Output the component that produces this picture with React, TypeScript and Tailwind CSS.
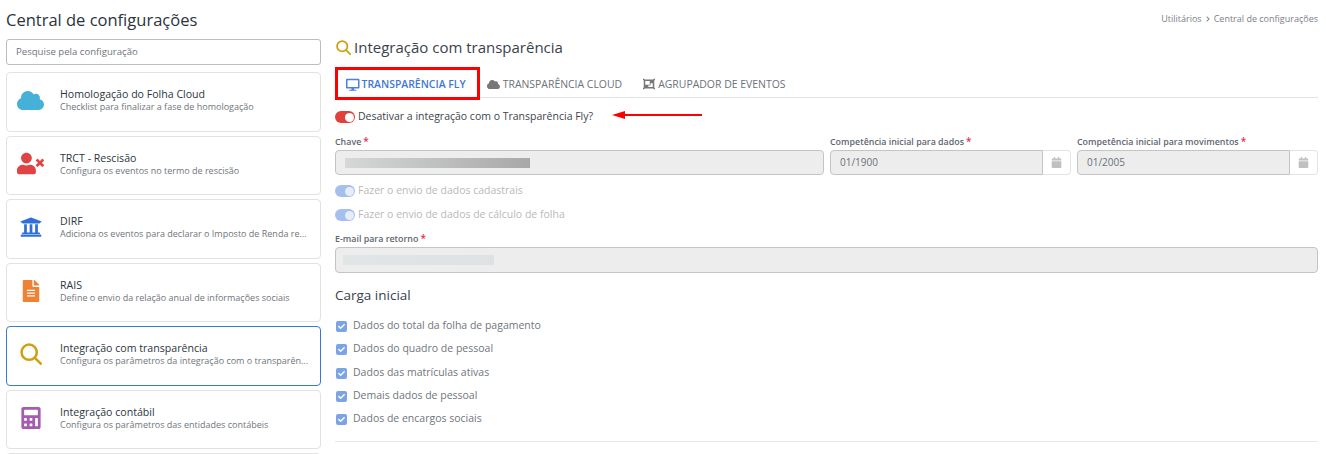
import { FaCloud, FaUserTimes, FaUniversity, FaFileAlt, FaCalculator, FaDesktop, FaObjectGroup, FaCalendar, FaCheck, FaChevronRight } from "react-icons/fa";
import type { ReactNode } from "react";

function SearchRing({ className }: { className: string }) {
  return (
    <svg className={className} viewBox="0 0 24 24" fill="none" stroke="#cf9f14" strokeWidth="2.8" strokeLinecap="round">
      <circle cx="10" cy="10" r="8.3" />
      <path d="M16.2 16.2L22.6 22.6" />
    </svg>
  );
}

const cards: { icon: ReactNode; title: string; sub: string; active?: boolean }[] = [
  { icon: <FaCloud className="text-[#45b0d8] text-[27px]" />, title: "Homologação do Folha Cloud", sub: "Checklist para finalizar a fase de homologação" },
  { icon: <FaUserTimes className="text-[#e04343] text-[27px]" />, title: "TRCT - Rescisão", sub: "Configura os eventos no termo de rescisão" },
  { icon: <FaUniversity className="text-[#2f6fd8] text-[22px]" />, title: "DIRF", sub: "Adiciona os eventos para declarar o Imposto de Renda re..." },
  { icon: <FaFileAlt className="text-[#ee8335] text-[22px]" />, title: "RAIS", sub: "Define o envio da relação anual de informações sociais" },
  { icon: <SearchRing className="w-[22px] h-[22px]" />, title: "Integração com transparência", sub: "Configura os parâmetros da integração com o transparên...", active: true },
  { icon: <FaCalculator className="text-[#a45cb0] text-[22px]" />, title: "Integração contábil", sub: "Configura os parâmetros das entidades contábeis" },
];

function Card({ icon, title, sub, active }: { icon: ReactNode; title: string; sub: string; active?: boolean }) {
  return (
    <div className={`h-[59.5px] shrink-0 rounded border bg-white flex ${active ? "border-[#3a78d8]" : "border-[#e2e2e2]"}`}>
      <div className="w-[53px] shrink-0 flex items-center justify-center pr-[6px] pb-[3px]">{icon}</div>
      <div className="min-w-0 flex-1 pt-[14px] pr-2">
        <div className="text-[10.6px] leading-[14px] text-[#2d3640] truncate">{title}</div>
        <div className="text-[9px] leading-[12px] text-[#70757c] truncate">{sub}</div>
      </div>
    </div>
  );
}

function Req() {
  return <span className="text-[#e0334c] text-[10px] leading-none ml-[2px]">*</span>;
}

function Label({ children }: { children: ReactNode }) {
  return (
    <div className="text-[8.9px] leading-[14px] font-semibold text-[#5f6670] whitespace-nowrap">
      {children}
      <Req />
    </div>
  );
}

function DateField({ label, value }: { label: string; value: string }) {
  return (
    <div className="w-[241px] shrink-0">
      <Label>{label}</Label>
      <div className="mt-[1px] h-[25px] flex">
        <div className="flex-1 border border-[#c4c4c4] rounded-l bg-[#ededed] text-[10px] text-[#6c7178] flex items-center pl-[9px]">{value}</div>
        <div className="w-[28px] border border-l-0 border-[#e4e4e4] rounded-r flex items-center justify-center">
          <FaCalendar className="text-[#c0c0c0] text-[11px]" />
        </div>
      </div>
    </div>
  );
}

function Toggle({ on, label }: { on?: boolean; label: string }) {
  return (
    <div className="flex items-center h-[14px]">
      <div className={`w-[20px] h-[12px] rounded-full flex items-center justify-end pr-[1px] ${on ? "bg-[#e0413c]" : "bg-[#a5c0ee]"}`}>
        <div className={`w-[9px] h-[9px] rounded-full ${on ? "bg-white" : "bg-[#e6edf9]"}`} />
      </div>
      <span className={`ml-[3px] text-[10.5px] whitespace-nowrap ${on ? "text-[#3d444d]" : "text-[#b9b9b9]"}`}>{label}</span>
    </div>
  );
}

function Check({ label, cls }: { label: string; cls: string }) {
  return (
    <div className={`flex items-center h-[14px] ${cls}`}>
      <div className="w-[11px] h-[11px] ml-[1px] rounded-[2px] bg-[#7ba4e6] flex items-center justify-center">
        <FaCheck className="text-white text-[7px]" />
      </div>
      <span className="ml-[6px] text-[10.5px] text-[#70757c]">{label}</span>
    </div>
  );
}

export default function App() {
  return (
    <div className="relative h-[454px] w-[1326px] overflow-hidden bg-white flex gap-[14px] pl-[6px] pr-[8px] font-['Open_Sans',sans-serif]">
      <div className="w-[315px] shrink-0 flex flex-col">
        <h1 className="text-[16.5px] leading-[24px] mt-[8px] text-[#2b333b] whitespace-nowrap">Central de configurações</h1>
        <div className="mt-[7px] h-[26px] shrink-0 border border-[#bdbdbd] rounded-[3px] flex items-center pl-[9px] text-[9.6px] text-[#70757c]">Pesquise pela configuração</div>
        <div className="mt-[7px] flex flex-col gap-[4px]">
          {cards.map((c) => (
            <Card key={c.title} {...c} />
          ))}
          <div className="h-[59.5px] shrink-0 rounded border border-[#e2e2e2]" />
        </div>
      </div>

      <div className="flex-1 min-w-0">
        <div className="mt-[12px] h-[14px] flex items-center justify-end text-[9px] text-[#7a8087] whitespace-nowrap">
          Utilitários
          <FaChevronRight className="text-[6px] mx-[3px]" />
          Central de configurações
        </div>
        <div className="mt-[11px] h-[20px] flex items-center">
          <SearchRing className="w-[15px] h-[15px] ml-[1px]" />
          <h2 className="ml-[3px] text-[15px] text-[#3a424b] whitespace-nowrap">Integração com transparência</h2>
        </div>
        <div className="mt-[15px] h-[26px] border-b border-[#e2e2e2] flex items-center text-[10.45px] whitespace-nowrap">
          <div className="ml-[11px] flex items-center text-[#3f78d2] font-semibold">
            <FaDesktop className="text-[13.5px] mr-[2px] text-[#4a80e0]" />
            TRANSPARÊNCIA FLY
          </div>
          <div className="ml-[21px] flex items-center text-[#6d7279]">
            <FaCloud className="text-[13px] mr-[3px] text-[#777]" />
            TRANSPARÊNCIA CLOUD
          </div>
          <div className="ml-[21px] flex items-center text-[#6d7279]">
            <FaObjectGroup className="text-[12px] mr-[3px] text-[#777]" />
            AGRUPADOR DE EVENTOS
          </div>
        </div>
        <div className="mt-[12px]"><Toggle on label="Desativar a integração com o Transparência Fly?" /></div>

        <div className="mt-[11px] flex gap-[6px]">
          <div className="w-[489px] shrink-0">
            <Label>Chave</Label>
            <div className="mt-[1px] h-[25px] border border-[#c4c4c4] rounded bg-[#ededed] flex items-center pl-[9px]">
              <div className="w-[185px] h-[10px] bg-gradient-to-r from-[#d6d8d8] to-[#a8a8a8]" />
            </div>
          </div>
          <DateField label="Competência inicial para dados" value="01/1900" />
          <DateField label="Competência inicial para movimentos" value="01/2005" />
        </div>

        <div className="mt-[9px]"><Toggle label="Fazer o envio de dados cadastrais" /></div>
        <div className="mt-[10px]"><Toggle label="Fazer o envio de dados de cálculo de folha" /></div>

        <div className="mt-[10px]"><Label>E-mail para retorno</Label></div>
        <div className="mt-[1px] h-[26px] border border-[#c4c4c4] rounded bg-[#ededed] flex items-center pl-[7px]">
          <div className="w-[151px] h-[10px] bg-gradient-to-r from-[#e2e5e5] to-[#dfe2e2]" />
        </div>

        <h3 className="mt-[12px] text-[13.5px] leading-[20px] text-[#3a424b]">Carga inicial</h3>
        <Check cls="mt-[14px]" label="Dados do total da folha de pagamento" />
        <Check cls="mt-[9px]" label="Dados do quadro de pessoal" />
        <Check cls="mt-[10px]" label="Dados das matrículas ativas" />
        <Check cls="mt-[9px]" label="Demais dados de pessoal" />
        <Check cls="mt-[9px]" label="Dados de encargos sociais" />
        <div className="mt-[15px] border-t border-[#e8e8e8]" />
      </div>

      {/* annotations drawn over the screenshot */}
      <div className="absolute left-[335px] top-[67px] w-[145px] h-[33px] border-[3px] border-[#ff0000]" />
      <svg className="absolute left-[610px] top-[108px]" width="94" height="14" viewBox="0 0 94 14">
        <path d="M92 7H12" stroke="#ff0000" strokeWidth="2" />
        <path d="M2 7l13-4v8z" fill="#ff0000" />
      </svg>
    </div>
  );
}
